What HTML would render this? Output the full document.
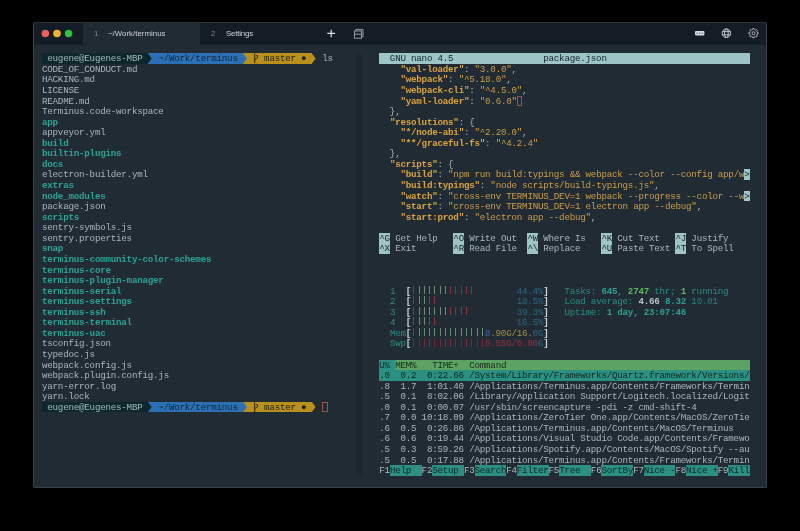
<!DOCTYPE html>
<html><head><meta charset="utf-8"><style>
html,body{margin:0;padding:0;background:#000;width:800px;height:531px;overflow:hidden;}
.win{position:absolute;left:33px;top:22px;width:734px;height:466px;background:#212b34;border-radius:2px;overflow:hidden;}
.bord{position:absolute;left:0;top:0;right:0;bottom:0;box-shadow:inset 1px 0 0 #3b444c,inset -1px 0 0 #3b444c,inset 0 1px 0 #2a3139,inset 0 -1px 0 #3a4149;border-radius:2px;z-index:5;}
.tabbar{position:absolute;left:1px;top:1px;right:1px;height:22px;background:#141d26;}
.tab1{position:absolute;left:49px;top:0;width:117px;height:22px;background:#212b34;}
.dot{position:absolute;top:6.85px;width:7.5px;height:7.5px;border-radius:50%;}
.tt{position:absolute;font-family:"Liberation Sans",sans-serif;font-size:7.9px;letter-spacing:-0.15px;color:#cdd1d6;top:5.8px;will-change:transform;white-space:pre;}
.tn{color:#7d848d;}
.divider{position:absolute;left:323px;top:32px;width:6px;height:422px;background:#1d252d;}
.term{position:absolute;left:0;top:0;width:734px;height:465px;will-change:transform;}
.r{position:absolute;height:10.56px;line-height:10.56px;font-family:"Liberation Mono",monospace;font-size:9.2px;letter-spacing:-0.225px;white-space:pre;color:#abb5bd;}
.r svg{display:inline-block;vertical-align:top;overflow:visible;}
.r span{display:inline-block;height:10.56px;line-height:11.9px;vertical-align:top;}
.fg{color:#abb5bd;}
.dir{color:#2ba392;font-weight:bold;}
.p1{background:#0e272c;color:#9dbcbc;}
.p2{background:#2b6fb5;color:#152536;}
.p3{background:#b8901a;color:#1e1e14;}
.arr{width:5.295px;}
.arr i{display:block;height:100%;width:3.9px;clip-path:polygon(0 0,100% 50%,0 100%);}
.cur{width:5.3px;height:10.5px !important;box-shadow:inset 0 0 0 1px #a5503c;}
.ncur{width:5.3px;height:10.5px !important;box-shadow:inset 0 0 0 1px #b04a38;}
.nbar{background:#9dc5c6;color:#14222a;}
.k{color:#d9a43e;font-weight:bold;}
.v{color:#cc9e48;}
.more{background:#9dc5c6;color:#14222a;}
.nk{background:#9dc5c6;color:#14222a;}
.cap{color:#2a8c80;}
.capd{color:#24807a;}
.capb{color:#2ba090;font-weight:bold;}
.grb{color:#5cba62;font-weight:bold;}
.whb{color:#bcc4cc;font-weight:bold;}
.brk{color:#d0d6dc;font-weight:bold;}
.bg1{color:#3a5e48;}
.bg2{color:#6b8c72;}
.brd{color:#8f2f3e;}
.pct{color:#246a84;}
.mb{color:#3a64b4;}
.my{color:#a39040;}
.sr{color:#a02c3c;}
.hh1{background:#2b8f82;color:#0d2e2c;box-shadow:1px 0 0 #2b8f82;}
.hh2{background:#5ca262;color:#142c18;}
.sel{background:#2b8f82;color:#0b2826;}
.fk{color:#b0bac2;}
.ft{background:#2b8f82;color:#0b2826;}
.br{width:5.28px;}

.r span.bar{width:5.295px;background:linear-gradient(currentColor,currentColor) no-repeat 2.2px 0.2px/1.1px 8px;}
.r span.bsw{color:#80283a;}

</style></head><body>
<div class="win">
<div class="tabbar">
 <div class="tab1"></div>
 <div class="tt tn" style="left:60px">1</div>
 <div class="tt" style="left:74px;letter-spacing:0">~/Work/terminus</div>
 <div class="tt tn" style="left:177px">2</div>
 <div class="tt" style="left:192px;letter-spacing:-0.2px">Settings</div>
 <svg style="position:absolute;left:0;top:0" width="732" height="22" viewBox="1 1 732 22">
  <circle cx="12.35" cy="11.5" r="3.75" fill="#ec5f59"/><circle cx="24.0" cy="11.5" r="3.75" fill="#f3b430"/><circle cx="35.6" cy="11.5" r="3.75" fill="#2ec23f"/>
  <path d="M294.3 11.4H302.1M298.2 7.7V15.2" stroke="#dfe3e7" stroke-width="1.2" fill="none"/>
  <g stroke="#a3a8ae" stroke-width="0.9" fill="none">
   <rect x="321.4" y="9" width="7.2" height="7.2"/>
   <path d="M321.4 12.2H328.6"/>
   <path d="M322.8 9V7.4H330V14.6H328.6"/>
  </g>
  <rect x="662" y="9" width="9.4" height="4.4" rx="0.8" fill="#d5d9dd"/>
  <g fill="#5a6068"><rect x="663.6" y="10.6" width="1.2" height="1.2"/><rect x="666.1" y="10.6" width="1.2" height="1.2"/><rect x="668.6" y="10.6" width="1.2" height="1.2"/></g>
  <g stroke="#cfd3d8" stroke-width="0.9" fill="none">
   <circle cx="693.4" cy="11.2" r="4.3"/>
   <ellipse cx="693.4" cy="11.2" rx="1.9" ry="4.3"/>
   <path d="M689.3 9.6H697.5M689.3 12.8H697.5"/>
  </g>
  <g stroke="#b9bec4" stroke-width="0.9" fill="none">
   <path d="M725.16 10.57 L725.16 11.83 L724.08 12.15 L723.70 13.06 L724.24 14.05 L723.35 14.94 L722.36 14.40 L721.45 14.78 L721.13 15.86 L719.87 15.86 L719.55 14.78 L718.64 14.40 L717.65 14.94 L716.76 14.05 L717.30 13.06 L716.92 12.15 L715.84 11.83 L715.84 10.57 L716.92 10.25 L717.30 9.34 L716.76 8.35 L717.65 7.46 L718.64 8.00 L719.55 7.62 L719.87 6.54 L721.13 6.54 L721.45 7.62 L722.36 8.00 L723.35 7.46 L724.24 8.35 L723.70 9.34 L724.08 10.25Z"/>
   <circle cx="720.5" cy="11.2" r="1.5"/>
  </g>
 </svg>
</div>
<div class="divider"></div>
<div class="bord"></div>

<div class="term">
<div class="r" style="left:9.00px;top:31.30px"><span class="p1"> eugene@Eugenes-MBP </span><span class="arr" style="background:#2b6fb5"><i style="background:#0e272c"></i></span><span class="p2"> ~/Work/terminus </span><span class="arr" style="background:#b8901a"><i style="background:#2b6fb5"></i></span><span class="p3"> <svg class="br" width="5.295" height="10.56" viewBox="0 0 5.295 10.56"><path d="M0.7 0.4V10.2M0.7 6.9C0.7 5.9 3.6 5.8 3.6 4.2V2.7H2.0" stroke="#2a2410" stroke-width="1" fill="none"/></svg> master ● </span><span class="arr" style="background:transparent"><i style="background:#b8901a"></i></span><span class="fg"> ls</span></div>
<div class="r" style="left:9.00px;top:41.86px"><span class="fg">CODE_OF_CONDUCT.md</span></div>
<div class="r" style="left:9.00px;top:52.42px"><span class="fg">HACKING.md</span></div>
<div class="r" style="left:9.00px;top:62.98px"><span class="fg">LICENSE</span></div>
<div class="r" style="left:9.00px;top:73.54px"><span class="fg">README.md</span></div>
<div class="r" style="left:9.00px;top:84.10px"><span class="fg">Terminus.code-workspace</span></div>
<div class="r" style="left:9.00px;top:94.66px"><span class="dir">app</span></div>
<div class="r" style="left:9.00px;top:105.22px"><span class="fg">appveyor.yml</span></div>
<div class="r" style="left:9.00px;top:115.78px"><span class="dir">build</span></div>
<div class="r" style="left:9.00px;top:126.34px"><span class="dir">builtin-plugins</span></div>
<div class="r" style="left:9.00px;top:136.90px"><span class="dir">docs</span></div>
<div class="r" style="left:9.00px;top:147.46px"><span class="fg">electron-builder.yml</span></div>
<div class="r" style="left:9.00px;top:158.02px"><span class="dir">extras</span></div>
<div class="r" style="left:9.00px;top:168.58px"><span class="dir">node_modules</span></div>
<div class="r" style="left:9.00px;top:179.14px"><span class="fg">package.json</span></div>
<div class="r" style="left:9.00px;top:189.70px"><span class="dir">scripts</span></div>
<div class="r" style="left:9.00px;top:200.26px"><span class="fg">sentry-symbols.js</span></div>
<div class="r" style="left:9.00px;top:210.82px"><span class="fg">sentry.properties</span></div>
<div class="r" style="left:9.00px;top:221.38px"><span class="dir">snap</span></div>
<div class="r" style="left:9.00px;top:231.94px"><span class="dir">terminus-community-color-schemes</span></div>
<div class="r" style="left:9.00px;top:242.50px"><span class="dir">terminus-core</span></div>
<div class="r" style="left:9.00px;top:253.06px"><span class="dir">terminus-plugin-manager</span></div>
<div class="r" style="left:9.00px;top:263.62px"><span class="dir">terminus-serial</span></div>
<div class="r" style="left:9.00px;top:274.18px"><span class="dir">terminus-settings</span></div>
<div class="r" style="left:9.00px;top:284.74px"><span class="dir">terminus-ssh</span></div>
<div class="r" style="left:9.00px;top:295.30px"><span class="dir">terminus-terminal</span></div>
<div class="r" style="left:9.00px;top:305.86px"><span class="dir">terminus-uac</span></div>
<div class="r" style="left:9.00px;top:316.42px"><span class="fg">tsconfig.json</span></div>
<div class="r" style="left:9.00px;top:326.98px"><span class="fg">typedoc.js</span></div>
<div class="r" style="left:9.00px;top:337.54px"><span class="fg">webpack.config.js</span></div>
<div class="r" style="left:9.00px;top:348.10px"><span class="fg">webpack.plugin.config.js</span></div>
<div class="r" style="left:9.00px;top:358.66px"><span class="fg">yarn-error.log</span></div>
<div class="r" style="left:9.00px;top:369.22px"><span class="fg">yarn.lock</span></div>
<div class="r" style="left:9.00px;top:379.78px"><span class="p1"> eugene@Eugenes-MBP </span><span class="arr" style="background:#2b6fb5"><i style="background:#0e272c"></i></span><span class="p2"> ~/Work/terminus </span><span class="arr" style="background:#b8901a"><i style="background:#2b6fb5"></i></span><span class="p3"> <svg class="br" width="5.295" height="10.56" viewBox="0 0 5.295 10.56"><path d="M0.7 0.4V10.2M0.7 6.9C0.7 5.9 3.6 5.8 3.6 4.2V2.7H2.0" stroke="#2a2410" stroke-width="1" fill="none"/></svg> master ● </span><span class="arr" style="background:transparent"><i style="background:#b8901a"></i></span> <span class="cur"></span></div>
<div class="r" style="left:346.30px;top:31.30px"><span class="nbar">  GNU nano 4.5                 package.json                           </span></div>
<div class="r" style="left:346.30px;top:41.86px">    <span class="k">"val-loader"</span><span class="fg">: </span><span class="v">"3.0.0"</span><span class="fg">,</span></div>
<div class="r" style="left:346.30px;top:52.42px">    <span class="k">"webpack"</span><span class="fg">: </span><span class="v">"^5.18.0"</span><span class="fg">,</span></div>
<div class="r" style="left:346.30px;top:62.98px">    <span class="k">"webpack-cli"</span><span class="fg">: </span><span class="v">"^4.5.0"</span><span class="fg">,</span></div>
<div class="r" style="left:346.30px;top:73.54px">    <span class="k">"yaml-loader"</span><span class="fg">: </span><span class="v">"0.6.0"</span><span class="ncur"></span></div>
<div class="r" style="left:346.30px;top:84.10px"><span class="fg">  },</span></div>
<div class="r" style="left:346.30px;top:94.66px">  <span class="k">"resolutions"</span><span class="fg">: {</span></div>
<div class="r" style="left:346.30px;top:105.22px">    <span class="k">"*/node-abi"</span><span class="fg">: </span><span class="v">"^2.20.0"</span><span class="fg">,</span></div>
<div class="r" style="left:346.30px;top:115.78px">    <span class="k">"**/graceful-fs"</span><span class="fg">: </span><span class="v">"^4.2.4"</span><span class="fg"></span></div>
<div class="r" style="left:346.30px;top:126.34px"><span class="fg">  },</span></div>
<div class="r" style="left:346.30px;top:136.90px">  <span class="k">"scripts"</span><span class="fg">: {</span></div>
<div class="r" style="left:346.30px;top:147.46px">    <span class="k">"build"</span><span class="fg">: </span><span class="v">"npm run build:typings &amp;&amp; webpack --color --config app/w</span><span class="more">&gt;</span></div>
<div class="r" style="left:346.30px;top:158.02px">    <span class="k">"build:typings"</span><span class="fg">: </span><span class="v">"node scripts/build-typings.js"</span><span class="fg">,</span></div>
<div class="r" style="left:346.30px;top:168.58px">    <span class="k">"watch"</span><span class="fg">: </span><span class="v">"cross-env TERMINUS_DEV=1 webpack --progress --color --w</span><span class="more">&gt;</span></div>
<div class="r" style="left:346.30px;top:179.14px">    <span class="k">"start"</span><span class="fg">: </span><span class="v">"cross-env TERMINUS_DEV=1 electron app --debug"</span><span class="fg">,</span></div>
<div class="r" style="left:346.30px;top:189.70px">    <span class="k">"start:prod"</span><span class="fg">: </span><span class="v">"electron app --debug"</span><span class="fg">,</span></div>
<div class="r" style="left:346.30px;top:210.82px"><span class="nk">^G</span><span class="fg"> Get Help   </span><span class="nk">^O</span><span class="fg"> Write Out  </span><span class="nk">^W</span><span class="fg"> Where Is   </span><span class="nk">^K</span><span class="fg"> Cut Text   </span><span class="nk">^J</span><span class="fg"> Justify    </span></div>
<div class="r" style="left:346.30px;top:221.38px"><span class="nk">^X</span><span class="fg"> Exit       </span><span class="nk">^R</span><span class="fg"> Read File  </span><span class="nk">^\</span><span class="fg"> Replace    </span><span class="nk">^U</span><span class="fg"> Paste Text </span><span class="nk">^T</span><span class="fg"> To Spell   </span></div>
<div class="r" style="left:346.30px;top:263.62px">  <span class="cap">1</span>  <span class="brk">[</span><span class="bar bg1"></span><span class="bar bg2"></span><span class="bar bg2"></span><span class="bar bg2"></span><span class="bar bg2"></span><span class="bar bg2"></span><span class="bar bg2"></span><span class="bar brd"></span><span class="bar brd"></span><span class="bar brd"></span><span class="bar brd"></span><span class="bar brd"></span>        <span class="pct">44.4%</span><span class="brk">]</span>   <span class="cap">Tasks: </span><span class="capb">645</span><span class="cap">, </span><span class="grb">2747</span><span class="cap"> thr; </span><span class="grb">1</span><span class="cap"> running</span></div>
<div class="r" style="left:346.30px;top:274.18px">  <span class="cap">2</span>  <span class="brk">[</span><span class="bar bg1"></span><span class="bar bg2"></span><span class="bar bg2"></span><span class="bar brd"></span><span class="bar brd"></span>               <span class="pct">18.5%</span><span class="brk">]</span>   <span class="cap">Load average: </span><span class="whb">4.66</span> <span class="capb">8.32</span> <span class="capd">10.01</span></div>
<div class="r" style="left:346.30px;top:284.74px">  <span class="cap">3</span>  <span class="brk">[</span><span class="bar bg1"></span><span class="bar bg2"></span><span class="bar bg2"></span><span class="bar bg2"></span><span class="bar bg2"></span><span class="bar bg2"></span><span class="bar bg2"></span><span class="bar brd"></span><span class="bar brd"></span><span class="bar brd"></span><span class="bar brd"></span>         <span class="pct">39.3%</span><span class="brk">]</span>   <span class="cap">Uptime: </span><span class="capb">1 day, 23:07:46</span></div>
<div class="r" style="left:346.30px;top:295.30px">  <span class="cap">4</span>  <span class="brk">[</span><span class="bar bg1"></span><span class="bar bg2"></span><span class="bar bg2"></span><span class="bar brd"></span><span class="bar brd"></span>               <span class="pct">16.5%</span><span class="brk">]</span></div>
<div class="r" style="left:346.30px;top:305.86px">  <span class="cap">Mem</span><span class="brk">[</span><span class="bar bg1"></span><span class="bar bg2"></span><span class="bar bg2"></span><span class="bar bg2"></span><span class="bar bg2"></span><span class="bar bg2"></span><span class="bar bg2"></span><span class="bar bg2"></span><span class="bar bg2"></span><span class="bar bg2"></span><span class="bar bg2"></span><span class="bar bg2"></span><span class="bar bg2"></span><span class="bar bg2"></span><span class="mb">8</span><span class="my">.90G/16.</span><span class="pct">0G</span><span class="brk">]</span></div>
<div class="r" style="left:346.30px;top:316.42px">  <span class="cap">Swp</span><span class="brk">[</span><span class="bar bsw"></span><span class="bar bsw"></span><span class="bar bsw"></span><span class="bar bsw"></span><span class="bar bsw"></span><span class="bar bsw"></span><span class="bar bsw"></span><span class="bar bsw"></span><span class="bar bsw"></span><span class="bar bsw"></span><span class="bar bsw"></span><span class="bar bsw"></span><span class="bar bsw"></span><span class="bar bsw"></span><span class="sr">5.55G/6.00</span><span class="pct">G</span><span class="brk">]</span></div>
<div class="r" style="left:346.30px;top:337.54px"><span class="hh1">U% </span><span class="hh2">MEM%   TIME+  Command                                              </span></div>
<div class="r" style="left:346.30px;top:348.10px"><span class="sel">.0  0.2  0:22.66 /System/Library/Frameworks/Quartz.framework/Versions/</span></div>
<div class="r" style="left:346.30px;top:358.66px"><span class="fg">.8  1.7  1:01.40 /Applications/Terminus.app/Contents/Frameworks/Termin</span></div>
<div class="r" style="left:346.30px;top:369.22px"><span class="fg">.5  0.1  8:02.06 /Library/Application Support/Logitech.localized/Logit</span></div>
<div class="r" style="left:346.30px;top:379.78px"><span class="fg">.0  0.1  0:00.07 /usr/sbin/screencapture -pdi -z cmd-shift-4          </span></div>
<div class="r" style="left:346.30px;top:390.34px"><span class="fg">.7  0.0 10:18.09 /Applications/ZeroTier One.app/Contents/MacOS/ZeroTie</span></div>
<div class="r" style="left:346.30px;top:400.90px"><span class="fg">.6  0.5  0:26.86 /Applications/Terminus.app/Contents/MacOS/Terminus   </span></div>
<div class="r" style="left:346.30px;top:411.46px"><span class="fg">.6  0.6  0:19.44 /Applications/Visual Studio Code.app/Contents/Framewo</span></div>
<div class="r" style="left:346.30px;top:422.02px"><span class="fg">.5  0.3  8:59.26 /Applications/Spotify.app/Contents/MacOS/Spotify --au</span></div>
<div class="r" style="left:346.30px;top:432.58px"><span class="fg">.5  0.5  0:17.88 /Applications/Terminus.app/Contents/Frameworks/Termin</span></div>
<div class="r" style="left:346.30px;top:443.14px"><span class="fk">F1</span><span class="ft">Help  </span><span class="fk">F2</span><span class="ft">Setup </span><span class="fk">F3</span><span class="ft">Search</span><span class="fk">F4</span><span class="ft">Filter</span><span class="fk">F5</span><span class="ft">Tree  </span><span class="fk">F6</span><span class="ft">SortBy</span><span class="fk">F7</span><span class="ft">Nice -</span><span class="fk">F8</span><span class="ft">Nice +</span><span class="fk">F9</span><span class="ft">Kill</span></div>
</div>
</div>
</body></html>
